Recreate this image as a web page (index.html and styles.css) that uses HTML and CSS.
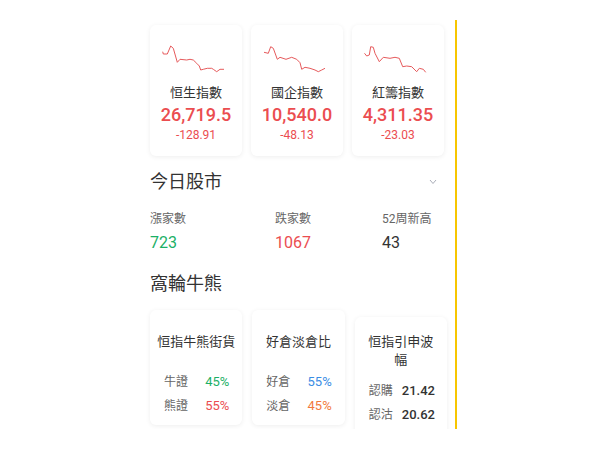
FILE: index.html
```html
<!DOCTYPE html>
<html lang="zh-Hant">
<head>
    <meta charset="UTF-8">
    <meta name="viewport" content="width=device-width, initial-scale=1.0">
    <title>今日股市</title>
    <link rel="stylesheet" href="styles.css">
</head>
<body>
    <div class="phone">
        <!-- Index cards -->
        <div class="index-list">
            <div class="index-card">
                <svg class="chart" width="64" height="30" viewBox="0 0 64 30">
                    <polyline points="0.7,6.7 1.3,9 5.3,9 8.7,1 11.3,3.3 15.3,17.3 18,14.3 24.7,15 28,14.3 31.3,15 34.7,18.3 37.3,21 38.7,25 41.3,24.3 45.3,23.3 49.7,23.3 51.3,24.3 54.7,26.7 58,24.3 62,24.3"/>
                </svg>
                <div class="index-name">恒生指數</div>
                <div class="index-value down">26,719.5</div>
                <div class="index-change down">-128.91</div>
            </div>
            <div class="index-card">
                <svg class="chart" width="64" height="30" viewBox="0 0 64 30">
                    <polyline points="1,7.3 5.3,8.3 7.7,1.7 10.3,3.3 14.3,14.3 17,12.3 23,14.3 28.7,12.3 33.7,14.3 37,17.7 38.7,24.3 42,22.3 47,23.3 52,25 55.3,26.7 58.7,25 62,23.3"/>
                </svg>
                <div class="index-name">國企指數</div>
                <div class="index-value down">10,540.0</div>
                <div class="index-change down">-48.13</div>
            </div>
            <div class="index-card">
                <svg class="chart" width="64" height="30" viewBox="0 0 64 30">
                    <polyline points="0.5,8.3 2.7,11 5.3,10 6.7,1.7 9.3,2.3 11,8.3 15.3,16.7 19.3,12.3 26,13.3 31,12.3 35.3,13.3 38.7,21.7 42.7,21 47.7,21.7 52.7,26.7 55.3,23.3 59.3,24.3 61.7,27.3"/>
                </svg>
                <div class="index-name">紅籌指數</div>
                <div class="index-value down">4,311.35</div>
                <div class="index-change down">-23.03</div>
            </div>
        </div>

        <!-- Market today -->
        <div class="section-head">
            <h2>今日股市</h2>
            <svg class="chevron" width="8" height="6" viewBox="0 0 8 6">
                <polyline points="1,1 4,4.5 7,1"/>
            </svg>
        </div>
        <div class="stats">
            <div class="stat">
                <div class="stat-label">漲家數</div>
                <div class="stat-value up">723</div>
            </div>
            <div class="stat">
                <div class="stat-label">跌家數</div>
                <div class="stat-value down">1067</div>
            </div>
            <div class="stat">
                <div class="stat-label">52周新高</div>
                <div class="stat-value">43</div>
            </div>
        </div>

        <!-- Warrants & CBBCs -->
        <div class="section-head">
            <h2>窩輪牛熊</h2>
        </div>
        <div class="warrant-list">
            <div class="warrant-card">
                <div class="warrant-title">恒指牛熊街貨</div>
                <div class="warrant-rows">
                    <div class="warrant-row"><span>牛證</span><span class="num up">45%</span></div>
                    <div class="warrant-row"><span>熊證</span><span class="num down">55%</span></div>
                </div>
            </div>
            <div class="warrant-card">
                <div class="warrant-title">好倉淡倉比</div>
                <div class="warrant-rows">
                    <div class="warrant-row"><span>好倉</span><span class="num long">55%</span></div>
                    <div class="warrant-row"><span>淡倉</span><span class="num short">45%</span></div>
                </div>
            </div>
            <div class="warrant-card tall">
                <div class="warrant-title">恒指引申波<br>幅</div>
                <div class="warrant-rows">
                    <div class="warrant-row"><span>認購</span><span class="num dark">21.42</span></div>
                    <div class="warrant-row"><span>認沽</span><span class="num dark">20.62</span></div>
                </div>
            </div>
        </div>
    </div>
</body>
</html>
```

FILE: styles.css
```css
body {
    margin: 0;
    padding: 0;
    background-color: #fff;
    font-family: Roboto, "Noto Sans CJK TC", sans-serif;
    color: #333;
}
.phone {
    box-sizing: border-box;
    width: 315px;
    height: 409px;
    margin: 20px 0 0 142px;
    padding: 5px 8px 0 8px;
    border-right: 2px solid #f7c600;
    overflow: hidden;
}
.up { color: #1bb066; }
.down { color: #eb4d50; }
.long { color: #3a8de4; }
.short { color: #f27a3c; }
.dark { color: #333; }

/* index cards */
.index-list {
    display: flex;
    gap: 9px;
}
.index-card {
    width: 92px;
    height: 131px;
    box-sizing: border-box;
    padding-top: 20px;
    border-radius: 6px;
    background: #fff;
    box-shadow: 0 1px 5px rgba(0, 0, 0, 0.07);
    text-align: center;
}
.chart {
    display: block;
    margin-left: 12px;
}
.chart polyline {
    fill: none;
    stroke: #e65a5c;
    stroke-width: 1;
    stroke-linejoin: round;
}
.index-name {
    margin-top: 9px;
    font-size: 13px;
    line-height: 18px;
    color: #333;
}
.index-value {
    margin-top: 1px;
    font-size: 18px;
    line-height: 24px;
    font-weight: 500;
}
.index-change {
    font-size: 12px;
    line-height: 16px;
}

/* section headings */
.section-head {
    display: flex;
    align-items: center;
    justify-content: space-between;
    width: 294px;
    margin-top: 13px;
}
.section-head h2 {
    margin: 0;
    font-size: 18px;
    line-height: 26px;
    font-weight: 400;
    color: #333;
}
.chevron {
    margin-right: 7px;
}
.chevron polyline {
    fill: none;
    stroke: #a9adb8;
    stroke-width: 1;
}

/* stats */
.stats {
    display: grid;
    grid-template-columns: 125px 107px 1fr;
    margin-top: 15px;
}
.stat-label {
    font-size: 12px;
    line-height: 18px;
    color: #666;
}
.stat-value {
    margin-top: 4px;
    font-size: 16px;
    line-height: 22px;
}
.stats + .section-head {
    margin-top: 17px;
}

/* warrant cards */
.warrant-list {
    display: flex;
    align-items: flex-start;
    gap: 10px;
    margin-top: 13px;
}
.warrant-card {
    width: 93px;
    box-sizing: border-box;
    padding: 23px 6px 7px 6px;
    border-radius: 6px;
    background: #fff;
    box-shadow: 0 1px 5px rgba(0, 0, 0, 0.07);
}
.warrant-card.tall {
    margin-top: 7px;
    padding: 16px 6px 20px 6px;
}
.warrant-title {
    font-size: 13px;
    line-height: 18px;
    text-align: center;
    white-space: nowrap;
    color: #333;
}
.warrant-rows {
    margin-top: 19px;
    padding: 0 7px 0 8px;
}
.tall .warrant-rows {
    margin-top: 10px;
    padding: 0 6px 0 8px;
}
.warrant-row {
    display: flex;
    justify-content: space-between;
    font-size: 12px;
    line-height: 24px;
    color: #666;
}
.warrant-row .num {
    font-size: 13px;
}
.warrant-row .dark {
    font-weight: 500;
}
```
